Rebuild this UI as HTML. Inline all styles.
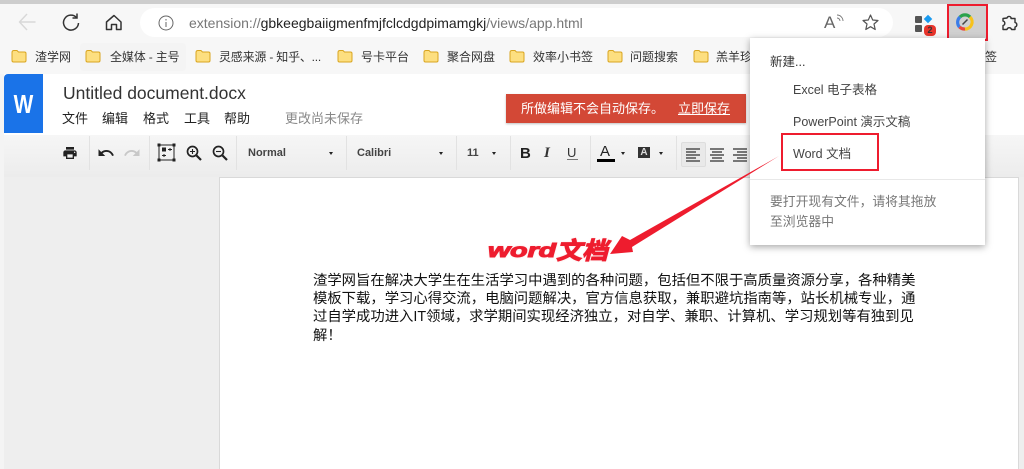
<!DOCTYPE html>
<html><head><meta charset="utf-8">
<style>
html,body{margin:0;padding:0;width:1024px;height:469px;overflow:hidden;background:#fff}
body{position:relative;font-family:"Liberation Sans","Noto Sans CJK SC",sans-serif;color:#333}
.a{position:absolute;white-space:nowrap}
.bm{position:absolute;top:50px;font-size:12px;line-height:14px;color:#333;white-space:nowrap}
.f{position:absolute;top:49px;width:16px;height:14px}
.m{position:absolute;top:111px;font-size:13px;line-height:16px;color:#222}
.sep{position:absolute;top:136px;width:1px;height:34px;background:#e2e2e2}
.tb{position:absolute;font-size:11px;font-weight:bold;color:#444;top:147px;line-height:13px}
.car{position:absolute;top:152px;width:0;height:0;border-left:2.5px solid transparent;border-right:2.5px solid transparent;border-top:3px solid #222}
svg{position:absolute;overflow:visible}
</style></head><body>
<div class="a" style="left:0;top:0;width:1024px;height:74px;background:#f7f7f7"></div>
<div class="a" style="left:0;top:0;width:1024px;height:4px;background:#cdcdcd"></div>
<div class="a" style="left:140px;top:8px;width:753px;height:29px;background:#fff;border-radius:15px"></div>

<svg style="left:19px;top:13px" width="18" height="18" fill="none" stroke="#d8d8d8" stroke-width="1.4"><path d="M0.500 9H16.500M8 1L0.500 9L8 17"/></svg>
<svg style="left:61px;top:13px" width="20" height="20" fill="none" stroke="#333" stroke-width="1.500"><path d="M15.500 4.500A7.500 7.500 0 1 0 17.500 10"/><path d="M16 0.500V5H11.500"/></svg>
<svg style="left:105px;top:14px" width="18" height="18" fill="none" stroke="#333" stroke-width="1.500"><path d="M1.500 8L9 1.500L16 8V15.500H11.500V10.500H6.500V15.500H1.500Z" stroke-linejoin="round"/></svg>
<svg style="left:158px;top:15px" width="16" height="16" fill="none" stroke="#666" stroke-width="1"><circle cx="8" cy="8" r="7"/><path d="M8 7V12M8 4V5.500"/></svg>
<div class="a" style="left:189px;top:15px;font-size:14px;line-height:17px;color:#777">extension://<span style="color:#222">gbkeegbaiigmenfmjfclcdgdpimamgkj</span>/views/app.html</div>
<div class="a" style="left:824px;top:13px;font-size:17px;line-height:20px;color:#666">A</div>
<svg style="left:836px;top:14px" width="9" height="9" fill="none" stroke="#777" stroke-width="0.900"><path d="M1 1A6 6 0 0 1 7 7M1 4A3 3 0 0 1 4 7"/></svg>
<svg style="left:862px;top:14px" width="17" height="17" fill="none" stroke="#555" stroke-width="1.200"><path d="M8.500 1L10.700 6L16 6.500L12 10L13.200 15.500L8.500 12.700L3.800 15.500L5 10L1 6.500L6.300 6Z" stroke-linejoin="round"/></svg>

<div class="a" style="left:915px;top:16px;width:7px;height:7px;background:#555;border-radius:1px"></div>
<div class="a" style="left:915px;top:25px;width:7px;height:7px;background:#555;border-radius:1px"></div>
<div class="a" style="left:925px;top:16px;width:6px;height:6px;background:#1a9bf0;transform:rotate(45deg)"></div>
<div class="a" style="left:924px;top:25px;width:12px;height:11px;background:#e8352c;border-radius:4px;color:#333;font-size:9px;line-height:11px;text-align:center;font-weight:bold">2</div>

<div class="a" style="left:947px;top:4px;width:37px;height:33px;background:#d0d0d0;border:2px solid #ee1c2e"></div>
<svg style="left:957px;top:14px" width="16" height="16" fill="none" stroke-width="3.200"><path d="M2.500 13A7 7 0 0 1 3 3" stroke="#3b7de8"/><path d="M3 3A7 7 0 0 1 13 3" stroke="#2ba24c"/><path d="M13 3A7 7 0 0 1 8 15" stroke="#f7c21a"/><path d="M8 15A7 7 0 0 1 2.500 13" stroke="#e8453c"/><path d="M5.500 10.500L10.500 5.500" stroke="#444" stroke-width="1.500"/></svg>
<svg style="left:1001px;top:15px" width="16" height="16" fill="none" stroke="#333" stroke-width="1.400"><path d="M6 3A2.200 2.200 0 0 1 10 2.500L10 3.500H14V7.500A2.300 2.300 0 0 1 14 12V14.500H10.500A2.300 2.300 0 0 0 6 14.500H2V10.500A2.300 2.300 0 0 0 2 6V3.500Z" stroke-linejoin="round"/></svg>

<svg width="0" height="0"><defs><g id="fd"><path d="M1 3.500Q1 1.500 3 1.500H6L7.500 3H13.500Q15 3 15 4.500V11.500Q15 13 13.500 13H2.500Q1 13 1 11.500Z" fill="#fddf80" stroke="#d9a520" stroke-width="1"/></g></defs></svg>
<svg class="f" style="left:11px"><use href="#fd"/></svg><div class="bm" style="left:35px">渣学网</div>
<div class="a" style="left:80px;top:43px;width:106px;height:28px;background:#f4f4f4;border-radius:4px"></div>
<svg class="f" style="left:85px"><use href="#fd"/></svg><div class="bm" style="left:110px;letter-spacing:-.15px">全媒体 - 主号</div>
<svg class="f" style="left:195px"><use href="#fd"/></svg><div class="bm" style="left:219px;letter-spacing:-.2px">灵感来源 - 知乎、...</div>
<svg class="f" style="left:337px"><use href="#fd"/></svg><div class="bm" style="left:361px">号卡平台</div>
<svg class="f" style="left:423px"><use href="#fd"/></svg><div class="bm" style="left:447px">聚合网盘</div>
<svg class="f" style="left:509px"><use href="#fd"/></svg><div class="bm" style="left:533px">效率小书签</div>
<svg class="f" style="left:607px"><use href="#fd"/></svg><div class="bm" style="left:630px">问题搜索</div>
<svg class="f" style="left:693px"><use href="#fd"/></svg><div class="bm" style="left:716px">羔羊珍</div>
<div class="bm" style="left:985px">签</div>

<div class="a" style="left:0;top:74px;width:1024px;height:395px;background:#fff"></div>
<div class="a" style="left:0;top:74px;width:4px;height:395px;background:#f4f4f4"></div>
<div class="a" style="left:4px;top:74px;width:39px;height:59px;background:#1a73e8;border-radius:4px 0 0 0"></div>
<div class="a" style="left:4px;top:89px;width:39px;text-align:center;font-size:26px;line-height:30px;font-weight:bold;color:#fff;transform:scaleX(.8)">W</div>
<div class="a" style="left:63px;top:83px;font-size:17.500px;line-height:20px;color:#333">Untitled document.docx</div>
<div class="m" style="left:62px">文件</div><div class="m" style="left:102px">编辑</div><div class="m" style="left:143px">格式</div><div class="m" style="left:184px">工具</div><div class="m" style="left:224px">帮助</div>
<div class="a" style="left:285px;top:111px;font-size:13px;line-height:16px;color:#888">更改尚未保存</div>

<div class="a" style="left:506px;top:94px;width:240px;height:29px;background:#d34836;box-shadow:0 1px 2px rgba(0,0,0,.25)"></div>
<div class="a" style="left:521px;top:101px;font-size:13px;line-height:16px;color:#fff">所做编辑不会自动保存。</div>
<div class="a" style="left:678px;top:101px;font-size:13px;line-height:16px;color:#fff;text-decoration:underline">立即保存</div>

<div class="a" style="left:4px;top:135px;width:1020px;height:334px;background:#eee"></div>
<div class="a" style="left:4px;top:135px;width:1020px;height:42px;background:linear-gradient(#f6f6f6,#ececec)"></div>
<div class="a" style="left:219px;top:177px;width:798px;height:292px;background:#fff;border:1px solid #d9d9d9;border-bottom:0"></div>

<svg style="left:62px;top:145px" width="16" height="16" viewBox="0 0 24 24" fill="#222"><path d="M19 8H5c-1.660 0-3 1.340-3 3v6h4v4h12v-4h4v-6c0-1.660-1.340-3-3-3zm-3 11H8v-5h8v5zm3-7c-.55 0-1-.45-1-1s.45-1 1-1 1 .45 1 1-.45 1-1 1zm-1-9H6v4h12V3z"/></svg>
<div class="sep" style="left:89px"></div>
<svg style="left:97px;top:144px" width="18" height="18" viewBox="0 0 24 24" fill="#222"><path d="M12.500 8c-2.650 0-5.050.99-6.900 2.600L2 7v9h9l-3.620-3.620c1.390-1.160 3.160-1.880 5.120-1.880 3.540 0 6.550 2.310 7.600 5.500l2.370-.78C21.080 11.030 17.150 8 12.500 8z"/></svg>
<svg style="left:123px;top:144px" width="18" height="18" viewBox="0 0 24 24" fill="#c8c8c8"><path d="M18.400 10.600C16.550 8.990 14.150 8 11.500 8c-4.650 0-8.580 3.030-9.970 7.220L3.900 16c1.050-3.190 4.050-5.500 7.600-5.500 1.950 0 3.730.72 5.120 1.880L13 16h9V7l-3.600 3.600z"/></svg>
<div class="sep" style="left:149px"></div>
<svg style="left:157px;top:143px" width="19" height="19" fill="#222"><rect x="2" y="2" width="15" height="15" fill="none" stroke="#222"/><rect x="0.500" y="0.500" width="3" height="3"/><rect x="15.500" y="0.500" width="3" height="3"/><rect x="0.500" y="15.500" width="3" height="3"/><rect x="15.500" y="15.500" width="3" height="3"/><rect x="5" y="4.500" width="4" height="4"/><path d="M11 6.500H15M13 5V8M5 12.500H9M7 11V14" stroke="#222"/></svg>
<svg style="left:186px;top:145px" width="16" height="16" fill="none" stroke="#222" stroke-width="1.700"><circle cx="6.500" cy="6.500" r="5"/><path d="M10.500 10.500L15 15" stroke-width="2.200"/><path d="M4 6.500H9M6.500 4V9" stroke-width="1.100"/></svg>
<svg style="left:212px;top:145px" width="16" height="16" fill="none" stroke="#222" stroke-width="1.700"><circle cx="6.500" cy="6.500" r="5"/><path d="M10.500 10.500L15 15" stroke-width="2.200"/><path d="M4 6.500H9" stroke-width="1.100"/></svg>
<div class="sep" style="left:236px"></div>
<div class="tb" style="left:248px">Normal</div><div class="car" style="left:329px"></div>
<div class="sep" style="left:346px"></div>
<div class="tb" style="left:357px">Calibri</div><div class="car" style="left:439px"></div>
<div class="sep" style="left:456px"></div>
<div class="tb" style="left:467px">11</div><div class="car" style="left:492px"></div>
<div class="sep" style="left:510px"></div>
<div class="a" style="left:520px;top:145px;font-size:15px;line-height:17px;font-weight:bold;color:#222;font-family:'Liberation Sans',sans-serif">B</div>
<div class="a" style="left:544px;top:145px;font-size:15px;line-height:17px;font-weight:bold;font-style:italic;color:#333;font-family:'Liberation Serif',serif">I</div>
<div class="a" style="left:567px;top:145px;font-size:13px;line-height:15px;color:#333">U</div>
<div class="a" style="left:567px;top:159px;width:11px;height:1px;background:#777"></div>
<div class="sep" style="left:590px"></div>
<div class="a" style="left:600px;top:144px;font-size:15px;line-height:15px;color:#222">A</div>
<div class="a" style="left:597px;top:159px;width:18px;height:3px;background:#000"></div>
<div class="car" style="left:621px"></div>
<div class="a" style="left:638px;top:147px;width:12px;height:11px;background:#333;color:#ddd;font-size:10px;line-height:11px;text-align:center;font-weight:bold">A</div>
<div class="car" style="left:659px"></div>
<div class="sep" style="left:676px"></div>
<div class="a" style="left:681px;top:142px;width:23px;height:23px;background:#e9e9e9;border:1px solid #ddd;border-radius:2px"></div>
<svg style="left:686px;top:148px" width="62" height="13" stroke="#666" stroke-width="1.700"><path d="M0 1H14M0 4H10M0 7H14M0 10H10M0 13H14"/><path d="M24 1H38M26 4H36M24 7H38M26 10H36M24 13H38"/><path d="M47 1H61M51 4H61M47 7H61M51 10H61M47 13H61"/></svg>
<div class="a" style="left:750px;top:135px;width:274px;height:42px;background:linear-gradient(90deg,rgba(0,0,0,.1),rgba(0,0,0,0) 10px)"></div>

<div class="a" style="left:750px;top:38px;width:235px;height:207px;background:#fff;box-shadow:0 2px 7px rgba(0,0,0,.35)"></div>
<div class="a" style="left:770px;top:54px;font-size:12.500px;line-height:16px;color:#333">新建...</div>
<div class="a" style="left:793px;top:82px;font-size:12.500px;line-height:16px;color:#444">Excel 电子表格</div>
<div class="a" style="left:793px;top:114px;font-size:12.500px;line-height:16px;color:#444">PowerPoint 演示文稿</div>
<div class="a" style="left:793px;top:146px;font-size:12.500px;line-height:16px;color:#444">Word 文档</div>
<div class="a" style="left:781px;top:133px;width:94px;height:34px;border:2px solid #ee1c2e"></div>
<div class="a" style="left:750px;top:179px;width:235px;height:1px;background:#e8e8e8"></div>
<div class="a" style="left:770px;top:192px;font-size:12.800px;line-height:20px;color:#777">要打开现有文件，请将其拖放<br>至浏览器中</div>

<svg style="left:0;top:0" width="1024" height="469"><path d="M779 156L630 240L622 236L610 254L633 252L632 247Z" fill="#ee1c2e"/></svg>
<div class="a" style="left:488px;top:241px;font-size:19px;line-height:22px;font-weight:bold;font-style:italic;color:#ee1c2e;-webkit-text-stroke:1px #ee1c2e;text-shadow:0 0 2px #f5c6c6;transform:scaleX(1.5);transform-origin:left top">word</div>
<div class="a" style="left:556px;top:239px;font-size:24px;line-height:26px;font-weight:bold;font-style:italic;color:#ee1c2e;-webkit-text-stroke:1px #ee1c2e;text-shadow:0 0 2px #f5c6c6;transform:scaleX(1.08);transform-origin:left top">文档</div>

<div class="a" style="left:313px;top:272px;width:606px;font-size:14.350px;line-height:18.200px;color:#111;white-space:normal;font-family:'Liberation Sans','Noto Sans CJK SC',sans-serif">
<div style="white-space:nowrap">渣学网旨在解决大学生在生活学习中遇到的各种问题，包括但不限于高质量资源分享，各种精美</div>
<div style="white-space:nowrap">模板下载，学习心得交流，电脑问题解决，官方信息获取，兼职避坑指南等，站长机械专业，通</div>
<div style="white-space:nowrap">过自学成功进入IT领域，求学期间实现经济独立，对自学、兼职、计算机、学习规划等有独到见</div>
<div style="white-space:nowrap">解！</div>
</div>
</body></html>
